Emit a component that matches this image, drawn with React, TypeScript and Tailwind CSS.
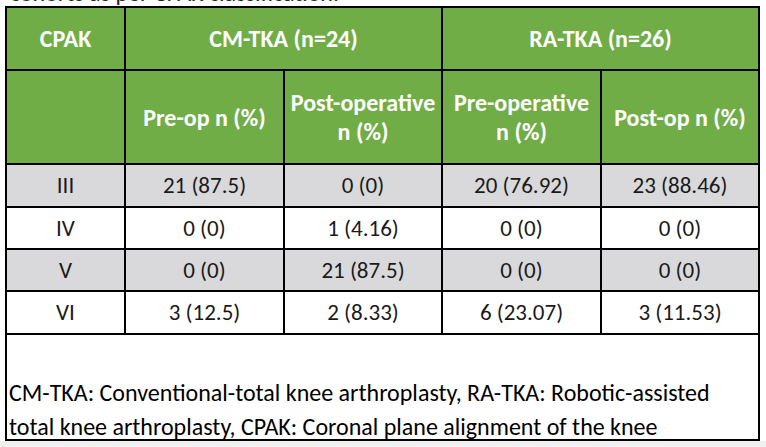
const rows = [
  ["III", "21 (87.5)", "0 (0)", "20 (76.92)", "23 (88.46)"],
  ["IV", "0 (0)", "1 (4.16)", "0 (0)", "0 (0)"],
  ["V", "0 (0)", "21 (87.5)", "0 (0)", "0 (0)"],
  ["VI", "3 (12.5)", "2 (8.33)", "6 (23.07)", "3 (11.53)"],
]

const font = { fontFamily: "Carlito, Lato, 'Liberation Sans', sans-serif" }

const head = "bg-[#70ad47] text-white font-bold text-[24px] leading-[29px] flex items-center justify-center text-center"

export default function App() {
  return (
    <div className="w-[766px] h-[447px] bg-white text-black overflow-hidden" style={font}>
      <div className="h-[6px] overflow-hidden flex flex-col justify-end pl-[10px]">
        <div className="text-[24px] leading-[24px] text-[#222] whitespace-nowrap mb-[1px]">
          cohorts as per CPAK classification.
        </div>
      </div>
      <div className="ml-[5px] w-[755px] bg-black p-[2px] grid grid-cols-[117px_157px_156px_157px_156px] grid-rows-[61px_92px_41px_40px_40px_41px_104px] gap-[2px]">
        {/* header row 1 */}
        <div className={head}>CPAK</div>
        <div className={"col-span-2 " + head}>CM-TKA (n=24)</div>
        <div className={"col-span-2 " + head}>RA-TKA (n=26)</div>
        {/* header row 2 */}
        <div className="bg-[#70ad47]" />
        <div className={head}>Pre-op n (%)</div>
        <div className={head}>Post-operative<br />n (%)</div>
        <div className={head}>Pre-operative<br />n (%)</div>
        <div className={head}>Post-op n (%)</div>
        {/* data */}
        {rows.map((r, i) =>
          r.map((c, j) => (
            <div
              key={i + "-" + j}
              className={
                "flex items-center justify-center text-[23px] text-[#1a1a1a] " +
                (i % 2 === 0 ? "bg-[#d9d9db]" : "bg-white")
              }
            >
              {c}
            </div>
          ))
        )}
        {/* footnote */}
        <div className="col-span-5 bg-white pt-[41px] px-[2px] text-[24px] leading-[34px] text-black whitespace-nowrap">
          <div>CM-TKA: Conventional-total knee arthroplasty, RA-TKA: Robotic-assisted</div>
          <div>total knee arthroplasty, CPAK: Coronal plane alignment of the knee</div>
        </div>
      </div>
      <div className="h-[6px] bg-[#f0f0f0]" />
    </div>
  )
}
